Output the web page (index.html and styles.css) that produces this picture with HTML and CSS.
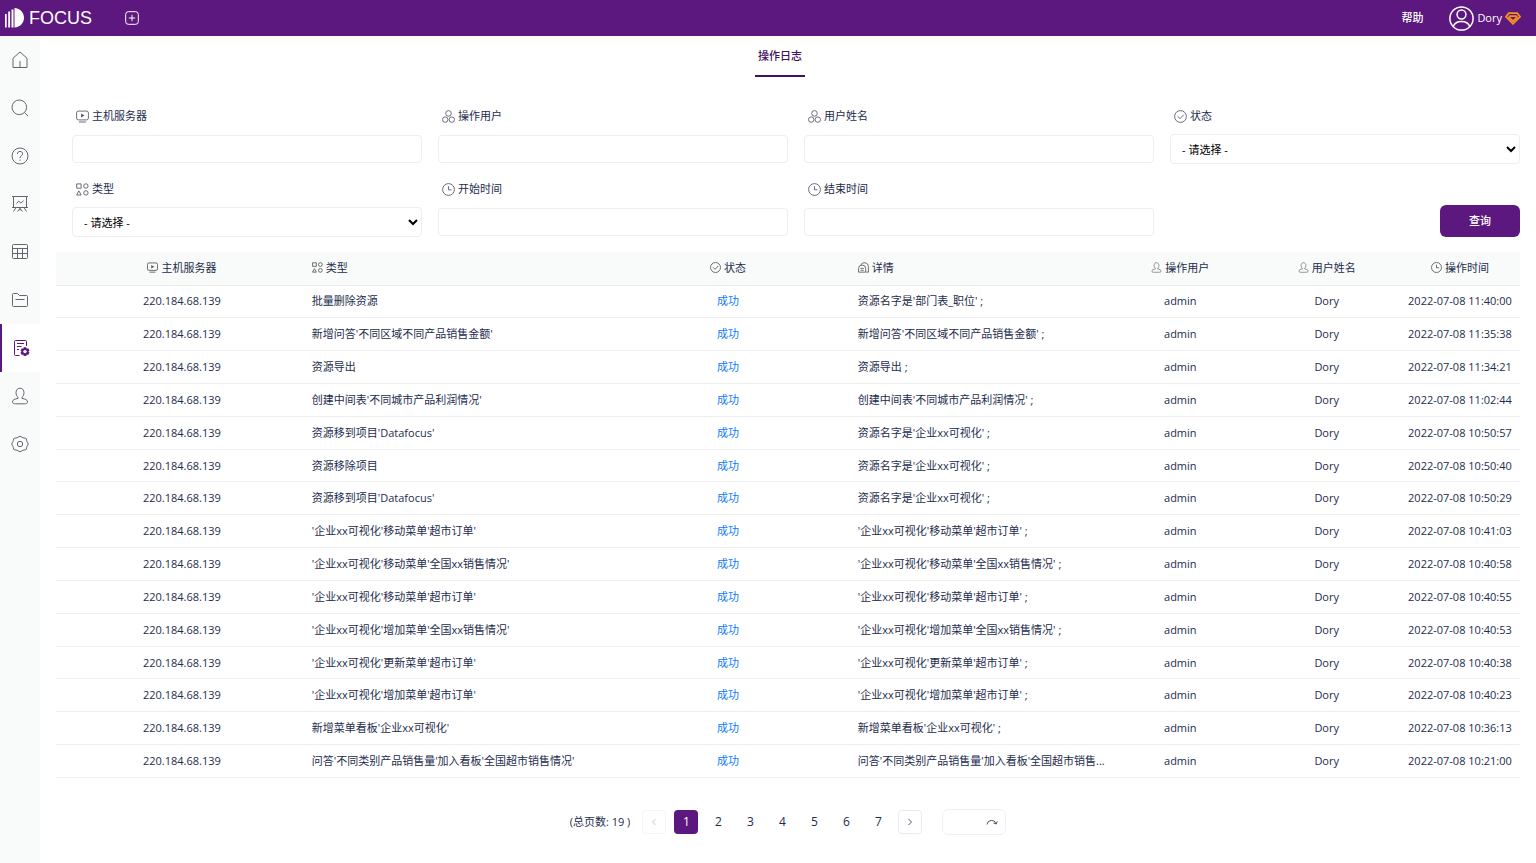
FILE: index.html
```html
<!DOCTYPE html>
<html lang="zh-CN">
<head>
<meta charset="utf-8">
<meta name="viewport" content="width=device-width, initial-scale=1">
<title>操作日志</title>
<link rel="stylesheet" href="styles.css">
</head>
<body>
<svg class="sprite" aria-hidden="true">
  <symbol id="i-host" viewBox="0 0 13 13"><rect x=".6" y="1.1" width="11.8" height="8.8" rx="1.8"/><path d="M3 12h7"/><path class="solid" d="M5 3.4 8.6 5.5 5 7.6z"/></symbol>
  <symbol id="i-group" viewBox="0 0 13 13"><circle cx="6.5" cy="3.4" r="2.8"/><circle cx="3.2" cy="9.6" r="2.7"/><circle cx="9.8" cy="9.6" r="2.7"/></symbol>
  <symbol id="i-check" viewBox="0 0 13 13"><circle cx="6.5" cy="6.5" r="5.9"/><path d="m3.600 6.300 2.400 2.400 3.700-4"/></symbol>
  <symbol id="i-type" viewBox="0 0 13 13"><path d="M.7.9h4.400v4.300H.7zM2.900 7.900 5.200 12H.6z"/><circle cx="9.900" cy="3" r="2.200"/><circle cx="9.900" cy="9.900" r="2.200"/></symbol>
  <symbol id="i-clock" viewBox="0 0 13 13"><circle cx="6.500" cy="6.500" r="5.900"/><path d="M6.500 3.200v3.600h3"/></symbol>
  <symbol id="i-detail" viewBox="0 0 13 13"><path d="M.7 12V7.800a4.200 4.200 0 0 1 8.400 0V12zM3 7.500h3.800M3 9.700h3.800M3.200 3.800A4.700 4.700 0 0 1 12.300 5.500V12H9.800"/></symbol>
  <symbol id="i-person" viewBox="0 0 18 18"><path d="M9 1.200c-2.500 0-4 2-4 4.400 0 2 .8 3.700 2 4.600v1.200c-3.100.5-5.600 1.600-5.600 3.500 0 1.500 1.800 1.900 3.400 1.900h8.400c1.600 0 3.400-.4 3.400-1.900 0-1.900-2.500-3-5.600-3.500v-1.200c1.200-.9 2-2.600 2-4.600 0-2.400-1.500-4.400-4-4.400z"/></symbol>
</svg>

<header class="topbar">
  <a class="brand" href="#">
    <svg class="brand-mark" viewBox="0 0 20 20" aria-hidden="true"><path d="M0 6h1.700v13.500H0zM3.200 3.500h1.900v16H3.200zM6.500 1.500h2v18h-2zM9.500 0c5.500.3 9.500 4.500 9.500 9.800s-4 9.400-9.500 9.700z"/></svg>
    <span>FOCUS</span>
  </a>
  <button class="add" type="button" aria-label="新建">
    <svg viewBox="0 0 14 14"><rect x=".7" y=".7" width="12.6" height="12.6" rx="2.6"/><path d="M7 3.800v6.400M3.800 7h6.400"/></svg>
  </button>
  <a class="help" href="#">帮助</a>
  <a class="account" href="#">
    <svg class="avatar" viewBox="0 0 25 25" aria-hidden="true"><circle cx="12.5" cy="12.5" r="11.6"/><circle cx="12.5" cy="8.500" r="4.400"/><path d="M4.300 20.500c1.200-3.300 4.300-5 8.200-5s7 1.700 8.200 5"/></svg>
    <span>Dory</span>
    <svg class="gem" viewBox="0 0 16 13" aria-hidden="true"><path d="M3.800 1.200h8.400L15 4.800l-7 7-7-7z"/><path d="M5 4.200h6l1 1.200-4 3.800-4-3.800z"/></svg>
  </a>
</header>

<div class="shell">
  <nav class="rail" aria-label="主导航">
    <a href="#" aria-label="首页"><svg viewBox="0 0 18 18"><path d="M2 7.200 9 1l7 6.200V16.500H2zM9 10v6.500"/></svg></a>
    <a href="#" aria-label="搜索"><svg viewBox="0 0 18 18"><circle cx="8.300" cy="8.300" r="7.300"/><path d="m13.400 13.400 3.600 3.600"/></svg></a>
    <a href="#" aria-label="问答"><svg viewBox="0 0 18 18"><circle cx="9" cy="9" r="8"/><path d="M6.400 7c0-1.600 1.100-2.600 2.600-2.600s2.600 1 2.600 2.400C11.600 8.700 9 8.700 9 11M9 12.500v1.300"/></svg></a>
    <a href="#" aria-label="看板"><svg viewBox="0 0 18 18"><path d="M1 1.500h16M2.500 1.500v11h13v-11M1 12.500h16M5 12.500l-2.500 4M13 12.500l2.500 4M9 12.500v3M9 13.500l-2.500 3M9 13.500l2.500 3M5.500 8.500l2.300-2.300 2 1.800 2.700-2.300"/></svg></a>
    <a href="#" aria-label="数据表"><svg viewBox="0 0 18 18"><rect x="1.500" y="1.500" width="15" height="14" rx="1"/><path d="M1.500 5.500h15M1.500 10.500h15M6.500 5.500v10M11.500 5.500v10"/></svg></a>
    <a href="#" aria-label="资源"><svg viewBox="0 0 18 18"><path d="M1.500 14.500v-11q0-1 1-1h4l2 2h7q1 0 1 1v9q0 1-1 1h-13q-1 0-1-1zM4.500 8.500h9"/></svg></a>
    <a class="current" href="#" aria-label="操作日志" aria-current="page"><svg viewBox="0 0 18 18"><path d="M14.500 7V2.500q0-1-1-1h-10q-1 0-1 1v13q0 1 1 1h4M5 4.500h7M5 7.500h4.500M5 10.500h2"/><path class="cog" d="M11.700 8.200h2.600l.4 1.500 1.500-.4 1.300 2.200-1.100 1.100 1.100 1.100-1.300 2.200-1.500-.4-.4 1.500h-2.600l-.4-1.500-1.500.4-1.300-2.200 1.100-1.100-1.100-1.100 1.300-2.200 1.500.4z"/><circle class="hole" cx="13" cy="12.600" r="1.700"/></svg></a>
    <a href="#" aria-label="用户"><svg><use href="#i-person"/></svg></a>
    <a href="#" aria-label="设置"><svg viewBox="0 0 18 18"><path d="M7 2.200Q9 .2 11 2.200q.8.900 2 .7 2.800-.2 2.700 2.400-.1 1.200.8 1.900 1.400 1.800 0 3.600-.9.700-.8 1.900.1 2.600-2.700 2.400-1.200-.2-2 .7-2 2-4 0-.8-.9-2-.7-2.800.2-2.700-2.400.1-1.200-.8-1.900-1.400-1.800 0-3.600.9-.7.800-1.900Q2.200 2.700 5 2.900q1.200.2 2-.7z"/><circle cx="9" cy="9" r="2.700"/></svg></a>
  </nav>

  <main class="content">
    <div class="tabs"><a class="tab" href="#" aria-current="page">操作日志</a></div>

    <form class="filters">
      <div class="field"><label for="host"><svg><use href="#i-host"/></svg>主机服务器</label><div class="control"><input id="host" type="text"></div></div>
      <div class="field"><label for="operator"><svg><use href="#i-group"/></svg>操作用户</label><div class="control"><input id="operator" type="text"></div></div>
      <div class="field"><label for="fullname"><svg><use href="#i-group"/></svg>用户姓名</label><div class="control"><input id="fullname" type="text"></div></div>
      <div class="field"><label for="state"><svg><use href="#i-check"/></svg>状态</label><div class="control"><select id="state"><option>- 请选择 -</option></select></div></div>
      <div class="field"><label for="kind"><svg><use href="#i-type"/></svg>类型</label><div class="control"><select id="kind"><option>- 请选择 -</option></select></div></div>
      <div class="field"><label for="start"><svg><use href="#i-clock"/></svg>开始时间</label><div class="control"><input id="start" type="text"></div></div>
      <div class="field"><label for="end"><svg><use href="#i-clock"/></svg>结束时间</label><div class="control"><input id="end" type="text"></div></div>
      <button class="query" type="button">查询</button>
    </form>

    <table class="log">
      <colgroup><col class="c-host"><col class="c-kind"><col class="c-state"><col class="c-detail"><col class="c-user"><col class="c-user"><col class="c-time"></colgroup>
      <thead>
        <tr>
          <th><svg><use href="#i-host"/></svg>主机服务器</th>
          <th class="left"><svg><use href="#i-type"/></svg>类型</th>
          <th><svg><use href="#i-check"/></svg>状态</th>
          <th class="left"><svg><use href="#i-detail"/></svg>详情</th>
          <th><svg><use href="#i-person"/></svg>操作用户</th>
          <th><svg><use href="#i-person"/></svg>用户姓名</th>
          <th><svg><use href="#i-clock"/></svg>操作时间</th>
        </tr>
      </thead>
      <tbody>
        <tr><td>220.184.68.139</td><td class="left">批量删除资源</td><td class="ok">成功</td><td class="left">资源名字是'部门表_职位' ;</td><td>admin</td><td>Dory</td><td>2022-07-08 11:40:00</td></tr>
        <tr><td>220.184.68.139</td><td class="left">新增问答'不同区域不同产品销售金额'</td><td class="ok">成功</td><td class="left">新增问答'不同区域不同产品销售金额' ;</td><td>admin</td><td>Dory</td><td>2022-07-08 11:35:38</td></tr>
        <tr><td>220.184.68.139</td><td class="left">资源导出</td><td class="ok">成功</td><td class="left">资源导出 ;</td><td>admin</td><td>Dory</td><td>2022-07-08 11:34:21</td></tr>
        <tr><td>220.184.68.139</td><td class="left">创建中间表'不同城市产品利润情况'</td><td class="ok">成功</td><td class="left">创建中间表'不同城市产品利润情况' ;</td><td>admin</td><td>Dory</td><td>2022-07-08 11:02:44</td></tr>
        <tr><td>220.184.68.139</td><td class="left">资源移到项目'Datafocus'</td><td class="ok">成功</td><td class="left">资源名字是'企业xx可视化' ;</td><td>admin</td><td>Dory</td><td>2022-07-08 10:50:57</td></tr>
        <tr><td>220.184.68.139</td><td class="left">资源移除项目</td><td class="ok">成功</td><td class="left">资源名字是'企业xx可视化' ;</td><td>admin</td><td>Dory</td><td>2022-07-08 10:50:40</td></tr>
        <tr><td>220.184.68.139</td><td class="left">资源移到项目'Datafocus'</td><td class="ok">成功</td><td class="left">资源名字是'企业xx可视化' ;</td><td>admin</td><td>Dory</td><td>2022-07-08 10:50:29</td></tr>
        <tr><td>220.184.68.139</td><td class="left">'企业xx可视化'移动菜单'超市订单'</td><td class="ok">成功</td><td class="left">'企业xx可视化'移动菜单'超市订单' ;</td><td>admin</td><td>Dory</td><td>2022-07-08 10:41:03</td></tr>
        <tr><td>220.184.68.139</td><td class="left">'企业xx可视化'移动菜单'全国xx销售情况'</td><td class="ok">成功</td><td class="left">'企业xx可视化'移动菜单'全国xx销售情况' ;</td><td>admin</td><td>Dory</td><td>2022-07-08 10:40:58</td></tr>
        <tr><td>220.184.68.139</td><td class="left">'企业xx可视化'移动菜单'超市订单'</td><td class="ok">成功</td><td class="left">'企业xx可视化'移动菜单'超市订单' ;</td><td>admin</td><td>Dory</td><td>2022-07-08 10:40:55</td></tr>
        <tr><td>220.184.68.139</td><td class="left">'企业xx可视化'增加菜单'全国xx销售情况'</td><td class="ok">成功</td><td class="left">'企业xx可视化'增加菜单'全国xx销售情况' ;</td><td>admin</td><td>Dory</td><td>2022-07-08 10:40:53</td></tr>
        <tr><td>220.184.68.139</td><td class="left">'企业xx可视化'更新菜单'超市订单'</td><td class="ok">成功</td><td class="left">'企业xx可视化'更新菜单'超市订单' ;</td><td>admin</td><td>Dory</td><td>2022-07-08 10:40:38</td></tr>
        <tr><td>220.184.68.139</td><td class="left">'企业xx可视化'增加菜单'超市订单'</td><td class="ok">成功</td><td class="left">'企业xx可视化'增加菜单'超市订单' ;</td><td>admin</td><td>Dory</td><td>2022-07-08 10:40:23</td></tr>
        <tr><td>220.184.68.139</td><td class="left">新增菜单看板'企业xx可视化'</td><td class="ok">成功</td><td class="left">新增菜单看板'企业xx可视化' ;</td><td>admin</td><td>Dory</td><td>2022-07-08 10:36:13</td></tr>
        <tr><td>220.184.68.139</td><td class="left">问答'不同类别产品销售量'加入看板'全国超市销售情况'</td><td class="ok">成功</td><td class="left">问答'不同类别产品销售量'加入看板'全国超市销售...</td><td>admin</td><td>Dory</td><td>2022-07-08 10:21:00</td></tr>
      </tbody>
    </table>

    <nav class="pager" aria-label="分页">
      <span class="total">(总页数: 19 )</span>
      <button class="step" type="button" disabled aria-label="上一页"><svg viewBox="0 0 8 8"><path d="M5.500 1 2.500 4l3 3"/></svg></button>
      <button class="active" type="button" aria-current="page">1</button>
      <button type="button">2</button>
      <button type="button">3</button>
      <button type="button">4</button>
      <button type="button">5</button>
      <button type="button">6</button>
      <button type="button">7</button>
      <button class="step" type="button" aria-label="下一页"><svg viewBox="0 0 8 8"><path d="m2.500 1 3 3-3 3"/></svg></button>
      <div class="jump">
        <input type="text" aria-label="跳转页码">
        <button type="button" aria-label="跳转"><svg viewBox="0 0 12 8"><path d="M1 6.500a4.600 4.600 0 0 1 9-.8M11.300 3.300 10.200 6 7.600 5"/></svg></button>
      </div>
    </nav>
  </main>
</div>
</body>
</html>
```
FILE: styles.css
```css
:root {
  --purple: #5c187e;
  --ink: #1d2c4c;
  --line: #eeeeee;
  --panel: #f9fbfb;
}

* { box-sizing: border-box; }

body {
  margin: 0;
  min-height: 100vh;
  display: flex;
  flex-direction: column;
  background: #fff;
  color: var(--ink);
  font: 11px/16px "Open Sans", "Noto Sans CJK SC", sans-serif;
}

a { color: inherit; text-decoration: none; }
button, input, select { font: inherit; color: inherit; }
button { padding: 0; border: 0; background: none; cursor: pointer; }
svg { fill: none; stroke: currentColor; }
.sprite { display: none; }
.solid { fill: currentColor; stroke: none; }

.topbar {
  display: flex;
  align-items: center;
  height: 36px;
  padding: 0 15px 0 5px;
  background: var(--purple);
  color: #fff;
}
.brand {
  display: flex;
  align-items: center;
  gap: 4px;
  font: 18px/20px "Liberation Sans", sans-serif;
}
.brand-mark { width: 20px; height: 20px; fill: #fff; stroke: none; }
.add { display: flex; margin-left: 33px; }
.add svg { width: 14px; height: 14px; }
.help { margin-left: auto; font-weight: 500; }
.account { display: flex; align-items: center; gap: 3px; margin-left: 26px; }
.avatar { width: 25px; height: 25px; stroke-width: 1.5; }
.gem { width: 16px; height: 13px; color: #f5921e; stroke-width: 1.8; }

.shell { display: flex; flex: 1; }
.rail { flex: none; width: 40px; background: var(--panel); color: #62676f; }
.rail a { display: flex; align-items: center; justify-content: center; height: 48px; }
.rail svg { width: 18px; height: 18px; }
.rail .current {
  background: #fff;
  color: var(--purple);
  border-left: 2px solid var(--purple);
}
.cog { fill: var(--purple); stroke: none; }
.hole { fill: #fff; stroke: none; }

.content { flex: 1; min-width: 0; padding: 0 16px 28px 0; }
.tabs { display: flex; justify-content: center; }
.tab {
  padding: 12px 3px 11px;
  border-bottom: 2px solid #3f1260;
  color: #3f1260;
  font-weight: 500;
}

.filters {
  display: grid;
  grid-template-columns: repeat(4, minmax(0, 1fr));
  gap: 16px;
  padding: 30px 0 0 32px;
}
.field { display: flex; flex-direction: column; gap: 9px; }
.field label { display: flex; align-items: center; gap: 3px; padding: 0 4px; height: 18px; }
.field label svg { width: 13px; height: 13px; color: #5d5a70; stroke-width: 0.9; }
.control { display: flex; align-items: center; height: 30px; }
.control input, .control select {
  width: 100%;
  height: 28px;
  padding: 0 8px;
  border: 1px solid var(--line);
  border-radius: 4px;
  background: #fff;
}
.control select { height: 30px; padding: 0 0 0 7px; color: #000; }
.query {
  justify-self: end;
  align-self: end;
  width: 80px;
  height: 32px;
  border-radius: 6px;
  background: var(--purple);
  color: #fff;
  font-weight: 500;
}

.log {
  width: calc(100% - 16px);
  height: 526px;
  margin: 15px 0 0 16px;
  table-layout: fixed;
  border-collapse: collapse;
  text-align: center;
}
.c-host, .c-state { width: 17.2%; }
.c-kind { width: 20.1%; }
.c-detail { width: 17.3%; }
.c-user { width: 10%; }
.c-time { width: 8.2%; }
.log th, .log td {
  padding: 0;
  border-bottom: 1px solid var(--line);
  white-space: nowrap;
}
.log th { height: 33px; background: var(--panel); font-weight: 400; }
.log th svg { width: 11px; height: 11px; margin-right: 3px; vertical-align: -1px; color: #555; }
.log .left { padding-left: 4px; text-align: left; }
.log .ok { color: #0a78ff; }

.pager {
  display: flex;
  align-items: center;
  justify-content: center;
  gap: 8px;
  margin: 31px 0 0 16px;
}
.total { margin-right: 4px; }
.pager > button { width: 24px; height: 24px; border-radius: 4px; font-size: 12px; }
.pager > .active { background: var(--purple); color: #fff; }
.pager > .step {
  display: flex;
  align-items: center;
  justify-content: center;
  border: 1px solid #e6ebf5;
}
.pager > .step:disabled { border-color: #f3f4f8; color: #b8bcc6; }
.step svg { width: 8px; height: 8px; stroke-width: 0.8; }
.jump {
  display: flex;
  align-items: center;
  width: 64px;
  height: 26px;
  margin-left: 12px;
  padding-right: 7px;
  border: 1px solid #edf1f7;
  border-radius: 6px;
}
.jump input { flex: 1; min-width: 0; height: 20px; border: 0; outline: 0; background: none; }
.jump button { display: flex; }
.jump svg { width: 12px; height: 8px; stroke-width: 0.8; }
```
